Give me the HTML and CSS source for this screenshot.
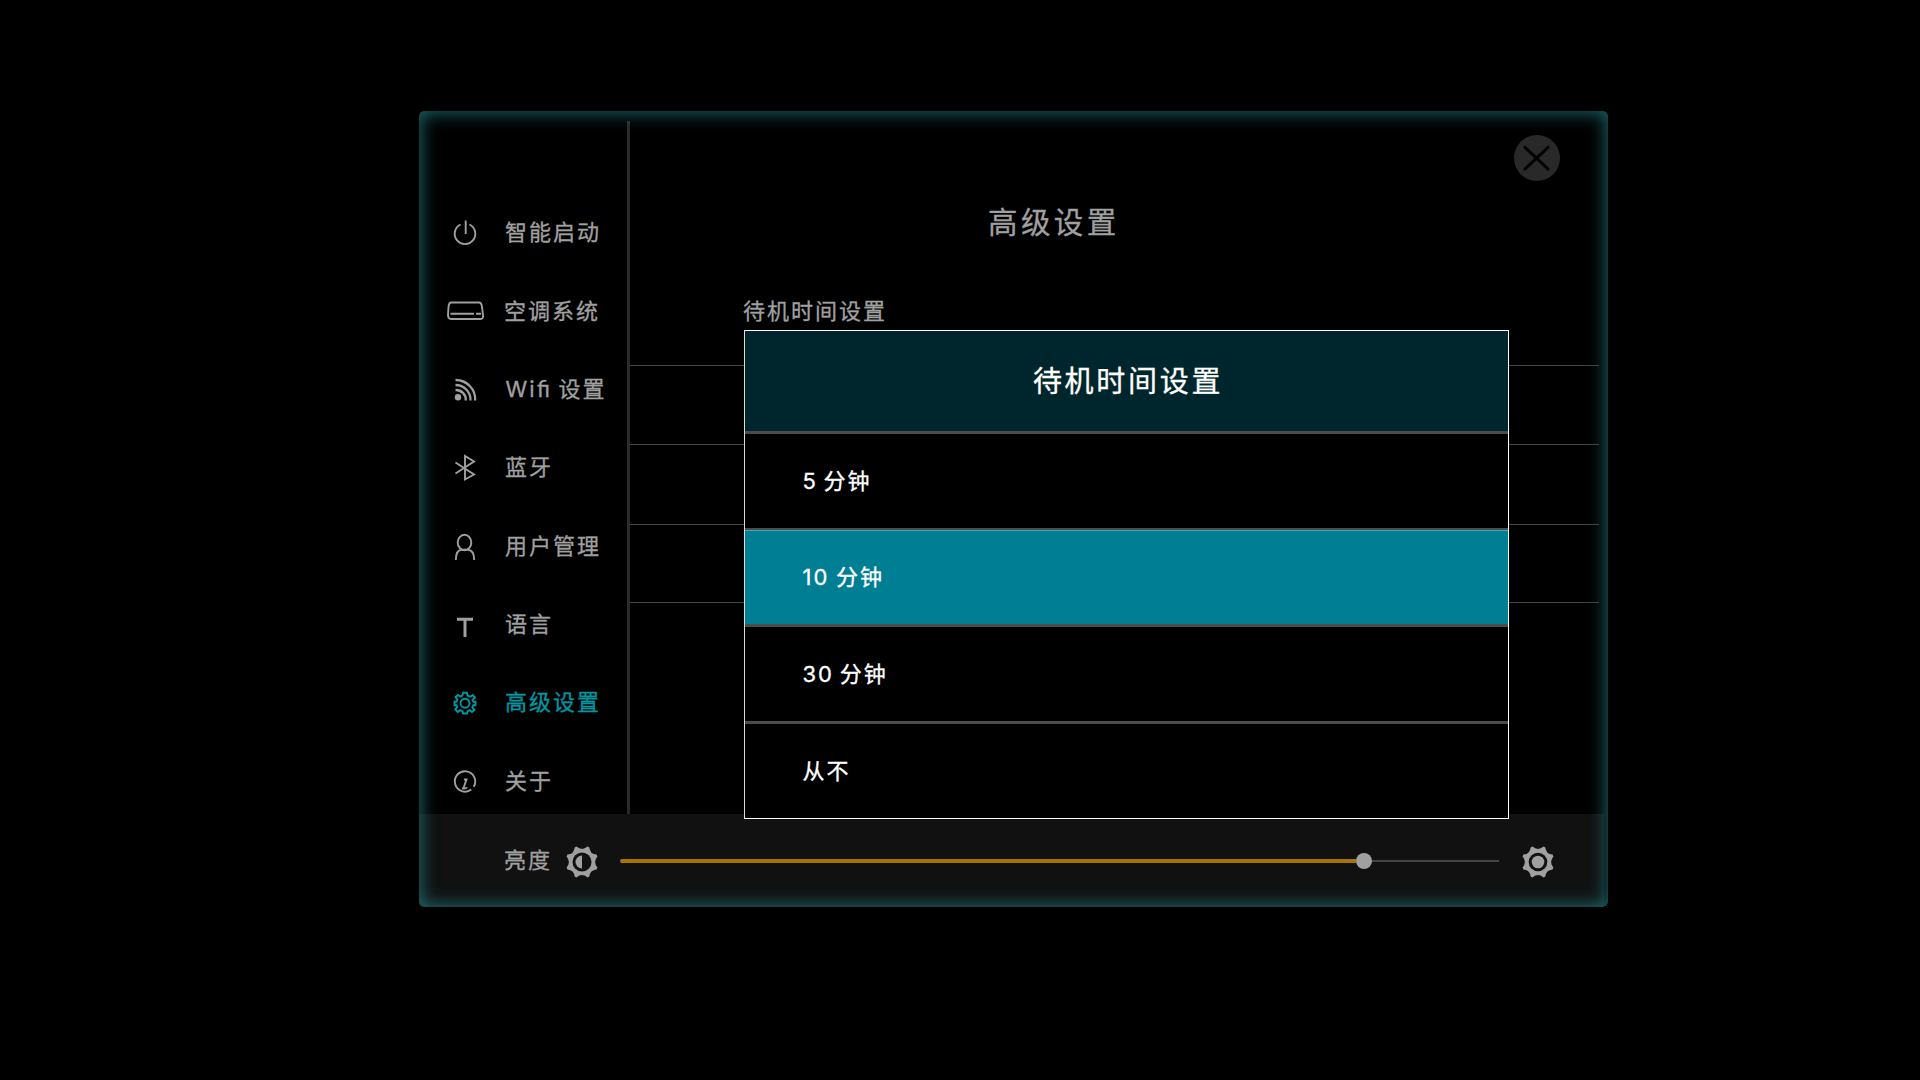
FILE: index.html
```html
<!DOCTYPE html>
<html lang="zh-CN">
<head>
<meta charset="utf-8">
<title>高级设置</title>
<link rel="stylesheet" href="styles.css">
</head>
<body>
<main class="panel">
  <div class="upper">
    <nav class="sidebar">
      <a class="item"><svg class="icon" viewBox="0 0 40 32"><path d="M15.6 7.5A10.3 10.3 0 1 0 24.4 7.5M20.700 3.5V17"/></svg><span>智能启动</span></a>
      <a class="item air"><svg class="icon" viewBox="0 0 40 32"><path d="M6 7.500H34Q36.5 7.500 37 12L38 20Q38.500 24 35.500 24H6Q3 24 3 20L3.500 12Q4 7.500 6 7.500ZM5.500 18.800H29M31 18.800H36"/></svg><span>空调系统</span></a>
      <a class="item"><svg class="icon wifi" viewBox="0 0 40 32"><circle class="solid" cx="13" cy="23.200" r="3.200"/><path d="M10.500 16A9.800 9.800 0 0 1 20.800 26.500M10.500 11A15 15 0 0 1 25.500 26.500M10.500 6A19.500 19.500 0 0 1 30.200 26.500"/></svg><span class="latin">Wi<span class="lig">fi</span> 设置</span></a>
      <a class="item"><svg class="icon" viewBox="0 0 40 32"><path d="M10.500 10.500L29 22.500L20 27.500V4L29 9.500L10.500 21.500"/></svg><span>蓝牙</span></a>
      <a class="item"><svg class="icon" viewBox="0 0 40 32"><ellipse cx="19.500" cy="11.500" rx="6.800" ry="7.700"/><path d="M10.800 29Q11 18.800 17 18.800H23Q29.200 19.500 29.200 29"/></svg><span>用户管理</span></a>
      <a class="item"><svg class="icon" viewBox="0 0 40 32"><path class="bold" d="M12 10.200H28M20 10.200V28"/></svg><span>语言</span></a>
      <a class="item active"><svg class="icon" viewBox="0 0 40 32"><path d="M18 5.700H22L22.500 8.500L25.500 9.700L27.800 8L30 10.500L27.500 12.800L28.300 14.800H30.500V18.200H28.300L27.300 20.500L29.500 23L27 25L24.800 23.200L22.500 24.300L22 26.500H18L17.500 24.200L15 23.200L12.800 25L10.200 22.500L12.300 20L11.500 18.200H9.500V14.800H11.500L12.500 12.500L10.500 10.200L13 8L15.300 9.700L17.500 8.500Z"/><circle cx="20" cy="16.200" r="4.500"/></svg><span>高级设置</span></a>
      <a class="item"><svg class="icon" viewBox="0 0 40 32"><path d="M26.300 23.500A10.200 10.200 0 1 1 28.700 20.800M19 13.500H21.500L18.500 22M17 22.300Q20.500 23.300 22 21.300"/></svg><span>关于</span></a>
    </nav>
    <section class="content">
      <h1>高级设置</h1>
      <div class="setting">待机时间设置</div>
      <div class="line"></div><div class="line"></div><div class="line"></div>
    </section>
  </div>
  <footer class="brightness">
    <span>亮度</span>
    <svg class="sun" viewBox="-16 -16 32 32"><path class="solid" d="M-5.500 -15.400Q0 -10.800 5.500 -15.400L7.400 -14.600Q7.900 -7.900 14.600 -7.400L15.400 -5.500Q10.800 0 15.400 5.500L14.600 7.400Q7.900 7.900 7.400 14.600L5.500 15.400Q0 10.800 -5.500 15.400L-7.400 14.600Q-7.900 7.900 -14.600 7.400L-15.400 5.500Q-10.800 0 -15.400 -5.500L-14.600 -7.400Q-7.900 -7.900 -7.400 -14.600Z"/><circle class="hole" r="9.500"/><path class="solid" d="M0 -6.500V6.500A6.500 6.500 0 0 1 0 -6.500Z"/></svg>
    <div class="track"><div class="fill"></div><div class="knob"></div><div class="rest"></div></div>
    <svg class="sun" viewBox="-16 -16 32 32"><path class="solid" d="M-5.500 -15.400Q0 -10.800 5.500 -15.400L7.400 -14.600Q7.900 -7.900 14.600 -7.400L15.400 -5.500Q10.800 0 15.400 5.500L14.600 7.400Q7.900 7.900 7.400 14.600L5.500 15.400Q0 10.800 -5.500 15.400L-7.400 14.600Q-7.900 7.900 -14.600 7.400L-15.400 5.500Q-10.800 0 -15.400 -5.500L-14.600 -7.400Q-7.900 -7.900 -7.400 -14.600Z"/><circle class="hole" r="9.300"/><circle class="solid" r="6.300"/></svg>
  </footer>
  <div class="glow"></div>
  <svg class="close" viewBox="0 0 46 46"><circle cx="23" cy="23" r="23"/><path d="M11 12.300L34 34M34 12.300L11 34"/></svg>
  <div class="modal">
    <h2>待机时间设置</h2>
    <div class="option">5 分钟</div>
    <div class="option selected">10 分钟</div>
    <div class="option">30 分钟</div>
    <div class="option">从不</div>
  </div>
</main>
</body>
</html>
```
FILE: styles.css
```css
* { box-sizing: border-box; }
body {
  margin: 0;
  height: 1080px;
  overflow: hidden;
  background: #000;
  color: #a0a0a0;
  font: 22px/32px Inter, "Noto Sans CJK SC", sans-serif;
  letter-spacing: 2px;
  word-spacing: -2.500px;
  -webkit-text-stroke: .3px currentColor;
}
.panel {
  position: relative;
  width: 1189px;
  height: 796px;
  margin: 111px 0 0 419px;
  border-radius: 5px;
  overflow: hidden;
  display: flex;
  flex-direction: column;
}
.upper { display: flex; height: 703px; }
.sidebar {
  width: 211px;
  margin-top: 10px;
  padding-top: 95px;
  border-right: 3px solid #2b2b2b;
}
.item {
  display: flex;
  align-items: center;
  gap: 20px;
  height: 32px;
  margin-bottom: 46.400px;
  padding-left: 26px;
}
.icon {
  width: 40px;
  height: 32px;
  overflow: visible;
  fill: none;
  stroke: currentColor;
  stroke-width: 1.900;
  transform: translateY(1px);
}
.wifi { stroke-width: 2.300; }
.air span { margin: 1px 0 0 -1px; }
.bold { stroke-width: 3; }
.solid { fill: #a0a0a0; stroke: none; }
.hole { fill: #111; }
.active { color: #0097a1; }
.latin { margin-left: .5px; word-spacing: -2px; }
.lig { letter-spacing: 0; font-family: Lato, sans-serif; font-size: 22.500px; margin: 0 2.500px 0 .5px; }
.content { flex: 1; padding: 90px 9px 0 0; }
h1 {
  margin: 0 0 0 358px;
  font-size: 29.500px;
  line-height: 42px;
  font-weight: 400;
  letter-spacing: 3.400px;
}
.setting {
  height: 123px;
  padding: 52px 0 0 113px;
  border-bottom: 1px solid #444;
}
.line { height: 79px; border-bottom: 1px solid #444; }
.line:nth-of-type(3) { height: 80px; }
.line:last-child { height: 78px; }
.brightness {
  display: flex;
  align-items: center;
  flex: 1;
  background: linear-gradient(#111, #111) 0 0 / 1185px 100% no-repeat;
  padding-left: 85px;
}
.sun { width: 32px; height: 32px; margin-top: 2px; flex: none; }
.brightness > span { width: 62px; margin-top: -1px; }
.track { display: flex; align-items: center; width: 879px; margin: 1px 23px 0 22px; }
.fill { width: 736px; height: 4px; border-radius: 2px 0 0 2px; background: #a87500; }
.knob { width: 16px; height: 16px; border-radius: 50%; background: #a0a0a0; }
.rest { flex: 1; height: 2px; background: #444; }
.glow {
  position: absolute;
  inset: 0;
  border-radius: 5px;
  box-shadow: inset 0 0 17px 2px rgba(34, 125, 130, .8);
}
.close { position: absolute; left: 1095px; top: 24px; width: 46px; height: 46px; }
.close circle { fill: #292929; }
.close path { stroke: #000; stroke-width: 3; stroke-linecap: round; }
.modal {
  position: absolute;
  left: 325px;
  top: 219px;
  width: 765px;
  height: 489px;
  border: 1px solid #fff;
  border-left-color: #ddd;
  background: #000;
  color: #fff;
}
h2 {
  margin: 0;
  height: 100px;
  padding-left: 3px;
  background: #00262d;
  font-size: 29px;
  line-height: 102px;
  font-weight: 400;
  letter-spacing: 2.700px;
  text-align: center;
}
.option {
  height: 97px;
  border-top: 3px solid #4c4c4c;
  padding-left: 57.500px;
  line-height: 94px;
}
.option.selected {
  height: 96px;
  border-top-width: 2px;
  background: #007e94;
  box-shadow: inset 0 1px #4fa3b1;
  word-spacing: -1.500px;
}
```
